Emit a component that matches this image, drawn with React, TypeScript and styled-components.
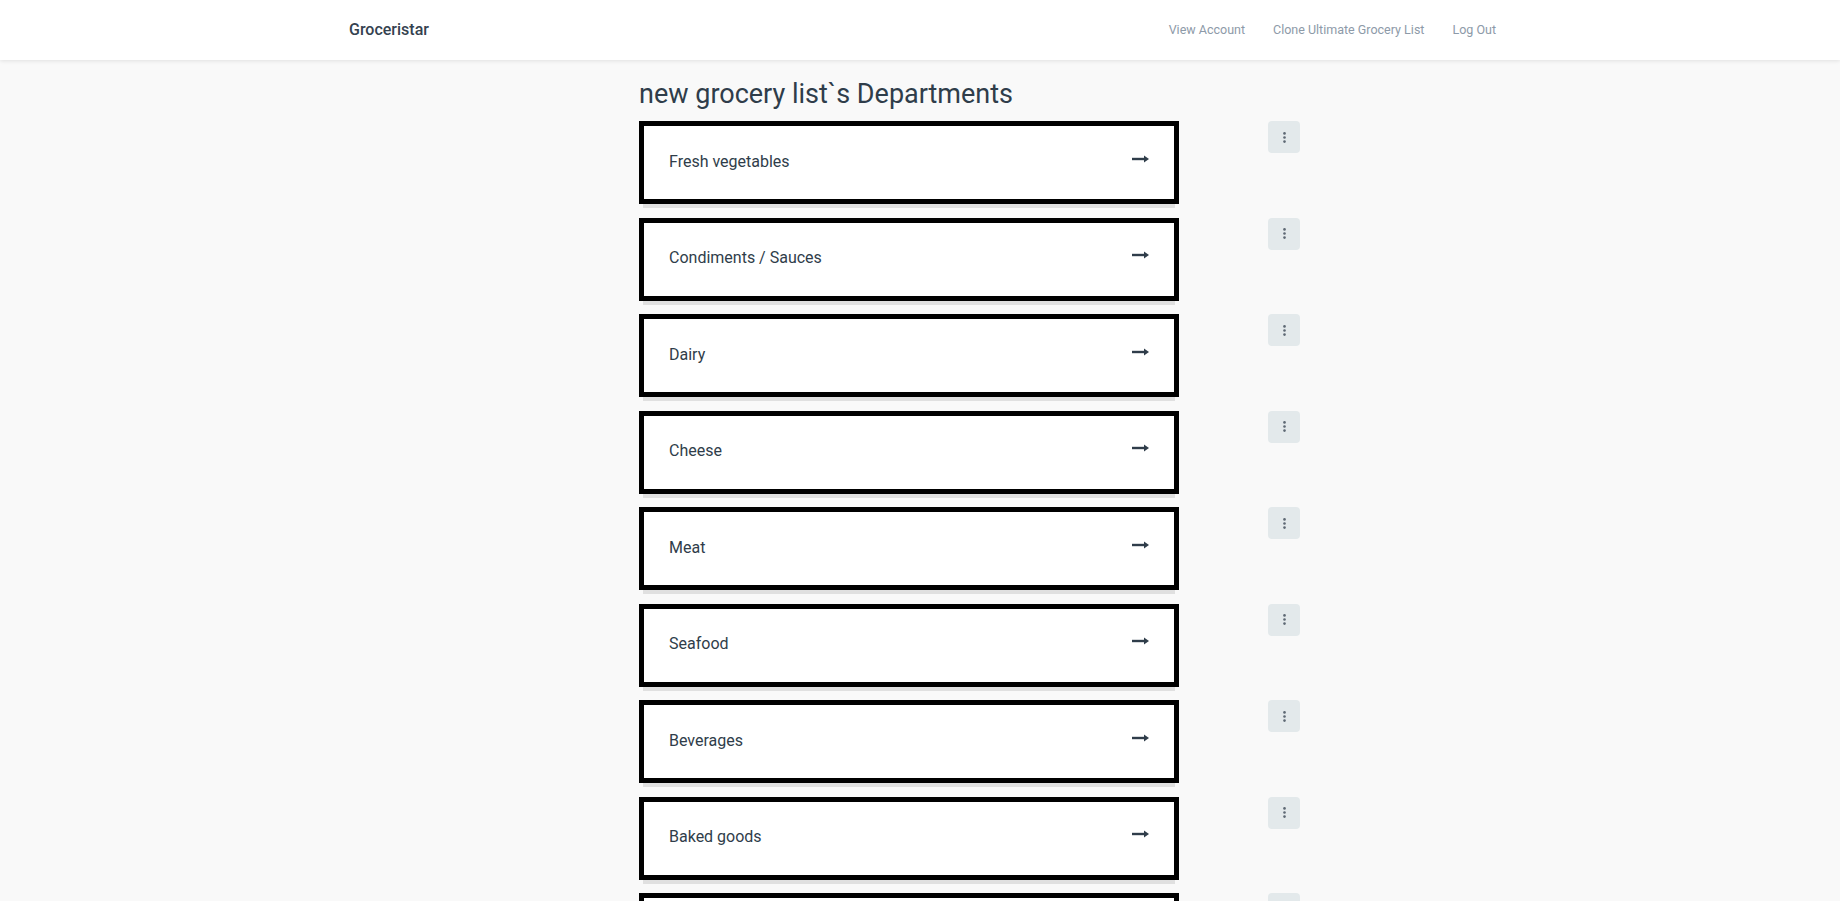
import styled, { createGlobalStyle } from 'styled-components'

const GlobalStyle = createGlobalStyle`
  html, body {
    margin: 0;
    padding: 0;
    background-color: #f9f9f9;
    font-family: Roboto, "Liberation Sans", Arial, sans-serif;
    color: #2f3d4a;
  }
  * {
    box-sizing: border-box;
  }
`

const Header = styled.header`
  height: 60px;
  background-color: #fff;
  box-shadow: 0 1px 4px rgba(0, 0, 0, 0.1);
`

const HeaderInner = styled.div`
  width: 1152px;
  height: 100%;
  margin: 0 auto;
  display: flex;
  align-items: center;
  justify-content: space-between;
`

const Brand = styled.a`
  margin-left: 5px;
  font-size: 16px;
  font-weight: 500;
  color: #34424f;
  text-decoration: none;
  margin-top: -2px;
`

const Nav = styled.nav`
  display: flex;
  align-items: center;
  gap: 28px;
  margin-top: -2px;
`

const NavLink = styled.a`
  font-size: 12.5px;
  font-weight: 400;
  color: #8d9aa8;
  text-decoration: none;
`

const Container = styled.main`
  width: 1152px;
  margin: 0 auto;
  padding: 18px 0 0 295px;
`

const Title = styled.h1`
  margin: 0 0 11px;
  font-size: 27px;
  font-weight: 400;
  line-height: 1.2;
  color: #2f3d4a;
`

const Row = styled.div`
  display: flex;
  align-items: flex-start;
  gap: 89px;
  margin-bottom: 13.5px;
`

const Card = styled.a`
  width: 540px;
  height: 83px;
  display: flex;
  align-items: center;
  justify-content: space-between;
  padding: 0 25px 2px;
  background-color: #fff;
  border: 5px solid #000;
  box-shadow: 0 8px 0 -4px #e0e0e0;
  text-decoration: none;
  color: #2f3d4a;
`

const CardLabel = styled.span`
  font-size: 16px;
  line-height: 1;
`

const Arrow = styled.svg`
  display: block;
  margin-bottom: 6px;
  color: #2f3d4a;
`

const MenuButton = styled.button`
  width: 32px;
  height: 32px;
  display: flex;
  align-items: center;
  justify-content: center;
  padding: 0;
  border: none;
  border-radius: 4px;
  background-color: #e3e9eb;
  cursor: pointer;
`

const departments = [
  'Fresh vegetables',
  'Condiments / Sauces',
  'Dairy',
  'Cheese',
  'Meat',
  'Seafood',
  'Beverages',
  'Baked goods',
  'Baking',
  'Frozen foods',
]

function LongArrow() {
  return (
    <Arrow width="17" height="8" viewBox="0 0 17 8">
      <rect x="0" y="2.8" width="13" height="2.4" fill="currentColor" />
      <path d="M12 0.5 L17 4 L12 7.5 Z" fill="currentColor" />
    </Arrow>
  )
}

function Kebab() {
  return (
    <svg width="3" height="11" viewBox="0 0 3 11">
      <circle cx="1.5" cy="1.4" r="1.3" fill="#5d6873" />
      <circle cx="1.5" cy="5.5" r="1.3" fill="#5d6873" />
      <circle cx="1.5" cy="9.6" r="1.3" fill="#5d6873" />
    </svg>
  )
}

export default function App() {
  return (
    <>
      <GlobalStyle />
      <Header>
        <HeaderInner>
          <Brand href="#">Groceristar</Brand>
          <Nav>
            <NavLink href="#">View Account</NavLink>
            <NavLink href="#">Clone Ultimate Grocery List</NavLink>
            <NavLink href="#">Log Out</NavLink>
          </Nav>
        </HeaderInner>
      </Header>

      <Container>
        <Title>new grocery list`s Departments</Title>
        {departments.map((name) => (
          <Row key={name}>
            <Card href="#">
              <CardLabel>{name}</CardLabel>
              <LongArrow />
            </Card>
            <MenuButton aria-label="menu">
              <Kebab />
            </MenuButton>
          </Row>
        ))}
      </Container>
    </>
  )
}
